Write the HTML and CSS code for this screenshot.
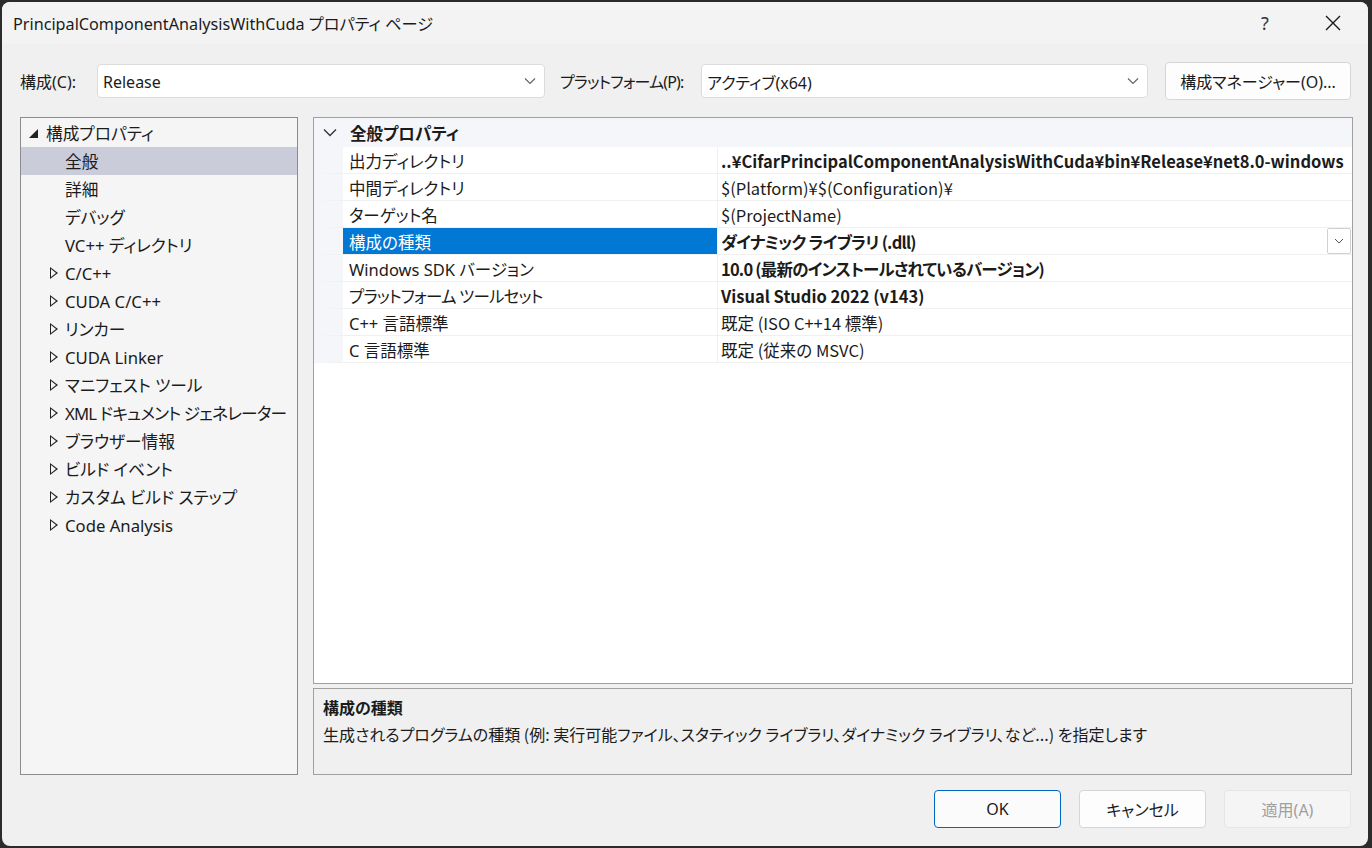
FILE: index.html
```html
<!DOCTYPE html>
<html lang="ja">
<head>
  <meta charset="UTF-8" />
  <title>PrincipalComponentAnalysisWithCuda プロパティ ページ</title>
  <link rel="stylesheet" href="styles.css">
</head>
<body>
  <div class="window">

    <!-- title bar -->
    <div class="titlebar">
      <span class="title">PrincipalComponentAnalysisWithCuda プロパティ ページ</span>
      <span class="help">?</span>
      <span class="close">
        <svg width="16" height="16" viewBox="0 0 16 16"><path d="M1 1 L15 15 M15 1 L1 15" stroke="#1a1a1a" stroke-width="1.4" fill="none"/></svg>
      </span>
    </div>

    <div class="content">
      <!-- configuration / platform row -->
      <div class="toolbar">
        <span class="label label-config">構成(C):</span>
        <div class="select select-config">
          <span>Release</span>
          <svg class="chev" width="12" height="8" viewBox="0 0 12 8"><path d="M1 1.5 L6 6.5 L11 1.5" stroke="#606060" stroke-width="1.1" fill="none"/></svg>
        </div>
        <span class="label label-platform tight">プラットフォーム(P):</span>
        <div class="select select-platform">
          <span>アクティブ(x64)</span>
          <svg class="chev" width="12" height="8" viewBox="0 0 12 8"><path d="M1 1.5 L6 6.5 L11 1.5" stroke="#606060" stroke-width="1.1" fill="none"/></svg>
        </div>
        <button class="btn btn-manager">構成マネージャー(O)...</button>
      </div>

      <div class="main">
        <!-- left tree -->
        <div class="tree">
          <div class="node root"><span class="tri-open"></span>構成プロパティ</div>
          <div class="node leaf selected">全般</div>
          <div class="node leaf">詳細</div>
          <div class="node leaf">デバッグ</div>
          <div class="node leaf">VC++ ディレクトリ</div>
          <div class="node branch"><span class="tri"></span>C/C++</div>
          <div class="node branch"><span class="tri"></span>CUDA C/C++</div>
          <div class="node branch"><span class="tri"></span>リンカー</div>
          <div class="node branch"><span class="tri"></span>CUDA Linker</div>
          <div class="node branch"><span class="tri"></span>マニフェスト ツール</div>
          <div class="node branch tight"><span class="tri"></span>XML ドキュメント ジェネレーター</div>
          <div class="node branch"><span class="tri"></span>ブラウザー情報</div>
          <div class="node branch"><span class="tri"></span>ビルド イベント</div>
          <div class="node branch"><span class="tri"></span>カスタム ビルド ステップ</div>
          <div class="node branch"><span class="tri"></span>Code Analysis</div>
        </div>

        <div class="right">
          <!-- property grid -->
          <div class="grid">
            <div class="category">
              <svg class="cat-chev" width="14" height="9" viewBox="0 0 14 9"><path d="M1 1.5 L7 7.5 L13 1.5" stroke="#333" stroke-width="1.3" fill="none"/></svg>
              <span>全般プロパティ</span>
            </div>
            <div class="row">
              <div class="name">出力ディレクトリ</div>
              <div class="value bold">..¥CifarPrincipalComponentAnalysisWithCuda¥bin¥Release¥net8.0-windows</div>
            </div>
            <div class="row">
              <div class="name">中間ディレクトリ</div>
              <div class="value">$(Platform)¥$(Configuration)¥</div>
            </div>
            <div class="row">
              <div class="name">ターゲット名</div>
              <div class="value">$(ProjectName)</div>
            </div>
            <div class="row active">
              <div class="name">構成の種類</div>
              <div class="value bold tight">ダイナミック ライブラリ (.dll)
                <span class="drop">
                  <svg width="10" height="6" viewBox="0 0 10 6"><path d="M1 1 L5 5 L9 1" stroke="#555" stroke-width="1" fill="none"/></svg>
                </span>
              </div>
            </div>
            <div class="row">
              <div class="name">Windows SDK バージョン</div>
              <div class="value bold tight">10.0 (最新のインストールされているバージョン)</div>
            </div>
            <div class="row">
              <div class="name tight">プラットフォーム ツールセット</div>
              <div class="value bold">Visual Studio 2022 (v143)</div>
            </div>
            <div class="row">
              <div class="name">C++ 言語標準</div>
              <div class="value">既定 (ISO C++14 標準)</div>
            </div>
            <div class="row">
              <div class="name">C 言語標準</div>
              <div class="value">既定 (従来の MSVC)</div>
            </div>
          </div>

          <!-- description -->
          <div class="desc">
            <div class="desc-title">構成の種類</div>
            <div class="desc-text">生成されるプログラムの種類 (例: 実行可能ファイル、スタティック ライブラリ、ダイナミック ライブラリ、など...) を指定します</div>
          </div>
        </div>
      </div>

      <div class="footer">
        <button class="btn btn-ok">OK</button>
        <button class="btn">キャンセル</button>
        <button class="btn disabled">適用(A)</button>
      </div>
    </div>
  </div>
</body>
</html>
```

FILE: styles.css
```css
body {
  margin: 0;
  background: #2b2b2b;
  font-family: "Noto Sans", "Noto Sans CJK JP", sans-serif;
  font-feature-settings: "palt";
  font-size: 16px;
  color: #1b1b1b;
}

.window {
  margin: 2px 0 0 2px;
  width: 1366px;
  height: 844px;
  background: #f0f0f0;
  border-radius: 8px;
  overflow: hidden;
}

/* title bar */
.titlebar {
  height: 42px;
  background: #f3f3f3;
  display: flex;
  align-items: center;
  padding-left: 11px;
  padding-right: 2px;
}

.title {
  font-size: 16.2px;
  flex: 1;
}

.help {
  width: 70px;
  text-align: center;
  font-size: 18px;
  color: #333;
}

.close {
  width: 66px;
  display: flex;
  justify-content: center;
}

/* body */
.content {
  padding: 18px 15px 0 18px;
}

.toolbar {
  display: flex;
  align-items: center;
  height: 38px;
}

.label {
  font-size: 16px;
}

.label-config { width: 77px; }
.label-platform { width: 141px; margin-left: 15px; }

.select {
  height: 32px;
  background: #fff;
  border: 1px solid #dcdcdc;
  border-radius: 4px;
  display: flex;
  align-items: center;
  justify-content: space-between;
  padding: 0 8px 0 5px;
  font-size: 16px;
  box-sizing: content-box;
}

.select span { padding-top: 2px; }

.select-config { width: 433px; }
.select-platform { width: 432px; }

.btn {
  font-family: inherit;
  font-feature-settings: "palt";
  font-size: 16px;
  color: #1b1b1b;
  background: #fdfdfd;
  border: 1px solid #d6d6d6;
  border-radius: 4px;
  height: 38px;
  width: 127px;
  padding: 0;
}

.btn-manager {
  width: 186px;
  margin-left: 17px;
}

.main {
  display: flex;
  margin-top: 17px;
  gap: 15px;
}

/* tree */
.tree {
  width: 276px;
  height: 655px;
  background: #f5f5f5;
  border: 1px solid #8b8b92;
  padding-top: 1px;
  box-sizing: content-box;
  font-size: 16.7px;
}

.node {
  height: 28px;
  display: flex;
  align-items: center;
  position: relative;
  padding-left: 44px;
  white-space: nowrap;
}

.node.root { padding-left: 8px; }
.node.selected { background: #cbccd9; }

.tight { letter-spacing: -0.8px; }

.tri-open {
  width: 0;
  height: 0;
  border-left: 9px solid transparent;
  border-bottom: 9px solid #222;
  margin: 0 8px 0 0;
}

.tri {
  position: absolute;
  left: 29px;
  top: 8px;
  width: 8px;
  height: 12px;
}

.tri::before {
  content: "";
  position: absolute;
  left: 0;
  top: 0;
  border-top: 6px solid transparent;
  border-bottom: 6px solid transparent;
  border-left: 8px solid #222;
}

.tri::after {
  content: "";
  position: absolute;
  left: 1px;
  top: 2px;
  border-top: 4px solid transparent;
  border-bottom: 4px solid transparent;
  border-left: 5px solid #f5f5f5;
}

/* right side */
.right {
  display: flex;
  flex-direction: column;
  gap: 4px;
}

.grid {
  width: 1038px;
  height: 565px;
  background: #fff;
  border: 1px solid #a0a0a0;
}

.category {
  height: 29px;
  background: #f4f6fa;
  display: flex;
  align-items: center;
  font-weight: bold;
  font-size: 16.5px;
}

.cat-chev {
  margin: 0 13px 0 9px;
}

.row {
  display: flex;
  height: 26px;
  border-bottom: 1px solid #f0f0f0;
  border-left: 29px solid #f4f6fa;
  font-size: 16.5px;
}

.name {
  width: 368px;
  padding-left: 6px;
  padding-top: 1px;
  border-right: 1px solid #f0f0f0;
  display: flex;
  align-items: center;
}

.row.active .name {
  background: #0078d4;
  color: #fff;
}

.value {
  flex: 1;
  padding-left: 3px;
  padding-top: 1px;
  display: flex;
  align-items: center;
  font-family: "Noto Sans CJK JP", sans-serif;
  white-space: nowrap;
  overflow: hidden;
  position: relative;
}

.bold { font-weight: bold; }

.drop {
  position: absolute;
  right: 1px;
  top: 0;
  width: 24px;
  height: 26px;
  border: 1px solid #d0d0d0;
  border-radius: 2px;
  background: #fff;
  display: flex;
  align-items: center;
  justify-content: center;
  box-sizing: border-box;
}

.desc {
  width: 1028px;
  height: 77px;
  background: #f0f0f0;
  border: 1px solid #a0a0a0;
  padding: 4px 0 4px 9px;
}

.desc-title {
  font-weight: bold;
  font-family: "Noto Sans CJK JP", sans-serif;
  height: 27px;
  display: flex;
  align-items: center;
}

.desc-text {
  font-family: "Noto Sans CJK JP", sans-serif;
  height: 27px;
  display: flex;
  align-items: center;
}

/* dialog buttons */
.footer {
  display: flex;
  justify-content: flex-end;
  gap: 18px;
  margin-top: 15px;
  padding-right: 2px;
}

.btn-ok {
  border-color: #0067c0;
  background: #fbfbfb;
}

.btn.disabled {
  color: #a0a0a0;
  background: #f5f5f5;
  border-color: #e5e5e5;
}
```
